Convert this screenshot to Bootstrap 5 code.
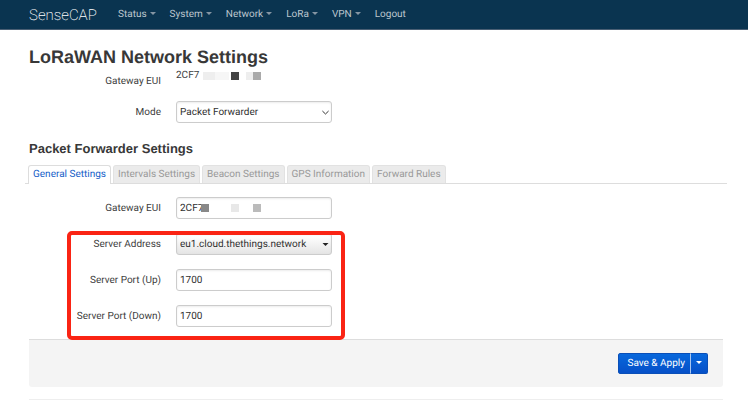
<!DOCTYPE html>
<html lang="en">
<head>
<meta charset="utf-8">
<meta name="viewport" content="width=device-width, initial-scale=1">
<title>SenseCAP - LoRaWAN Network Settings</title>
<link href="https://cdn.jsdelivr.net/npm/bootstrap@5.3.0/dist/css/bootstrap.min.css" rel="stylesheet">
<style>
  body { font-family: Roboto, "Liberation Sans", Arial, sans-serif; font-size: 10px; line-height: 14px; color: #404040; background: #fff; overflow-x: hidden; text-rendering: geometricPrecision; }
  .topbar { background: #0a3450; height: 30px; padding: 0 29px; border-bottom: 1px solid #4a5f74; }
  .topbar .navbar-brand { font-weight: 200; font-size: 15px; line-height: 28px; width: 89px; color: #fff; }
  .topbar .nav-link { color: #bcc6ce; line-height: 30px; margin-right: 14px; }
  .topbar .dropdown-toggle::after { border-width: 3px 3px 0; margin-left: 3px; vertical-align: 2px; color: #8595a3; }
  main { padding: 16px 25px 0 29px; }
  h1, h2 { font-family: "Liberation Sans", Arial, sans-serif; font-weight: 700; color: #383838; }
  h1 { font-size: 18px; line-height: 22px; }
  h2 { font-size: 13px; line-height: 18px; margin-top: 17px; }
  .field-label { width: 132px; margin-right: 15px; padding-top: 2px; text-align: right; }
  .field-label.eui-label { padding-top: 7px; }
  .eui-value { padding-top: 1px; }
  .field-box { width: 156px; }
  .mode-row { margin-top: 12px; }
  .field-box .form-control, .field-box .form-select { height: 22px; padding: 1px 3px 0; font-size: 10px; line-height: 20px; color: #303030; border: 1px solid #ccc; border-radius: 3px; box-shadow: inset 0 1px 2px rgba(0,0,0,.08); text-rendering: inherit; }
  .field-box .form-select.mode-select { background-position: right 2px center; background-size: 7px 7px; background-image: url("data:image/svg+xml,%3Csvg xmlns='http://www.w3.org/2000/svg' viewBox='0 0 7 7'%3E%3Cpath d='M.4 2 3.5 5 6.6 2' fill='none' stroke='%23333'/%3E%3C/svg%3E"); }
  .field-box .form-select.server-select { background-image: url("data:image/svg+xml,%3Csvg xmlns='http://www.w3.org/2000/svg' viewBox='0 0 7 7'%3E%3Cpath d='M.5 2h6l-3 3z' fill='%23222'/%3E%3C/svg%3E"), linear-gradient(#fff 10%, #e4e4e4); background-position: right 2px center, 0 0; background-size: 7px 7px, 100% 100%; }
  .settings-tabs { margin: 7px -4px 0; padding-left: 3px; gap: 2px; border-bottom: 1px solid #ddd; }
  .settings-tabs .nav-link { padding: 2px 4px 1px; line-height: 14px; color: #999; background: #ebebeb; border: 1px solid #e2e2e2; border-bottom: 0; border-radius: 3px 3px 0 0; }
  .settings-tabs .nav-link.active { color: #1560c8; background: #fff; border-color: #ddd; margin-bottom: -1px; }
  .tab-fields { padding: 13px 0 12px; gap: 14px; }
  .redacted { left: 25px; top: 7px; }
  .highlight { left: 38px; top: 47px; width: 278px; height: 109px; border: 4px solid #fa2414; border-radius: 5px; pointer-events: none; }
  .page-actions { background: #f4f4f4; border-top: 1px solid #ddd; border-radius: 0 0 3px 3px; padding: 13px 15px; }
  .page-actions .btn { font-size: 10px; line-height: 19px; color: #fff; padding: 0 5px 0 9px; border: 1px solid #0a4fb8; border-radius: 2px; background: linear-gradient(#0868dc, #0650c8); text-rendering: inherit; }
  .page-actions .dropdown-toggle-split { padding: 0 5px; border-left-color: #a9c6ee; }
  .page-actions .dropdown-toggle-split::after { border-width: 3px 3px 0; vertical-align: 2px; }
  .page-end { border-top: 1px solid #eee; margin-top: 12px; }
</style>
<script src="https://cdn.jsdelivr.net/npm/bootstrap@5.3.0/dist/js/bootstrap.bundle.min.js"></script>
</head>
<body>
<header class="topbar d-flex align-items-center">
  <a class="navbar-brand p-0 m-0" href="#">SenseCAP</a>
  <nav class="d-flex">
    <a class="nav-link dropdown-toggle" href="#">Status</a>
    <a class="nav-link dropdown-toggle" href="#">System</a>
    <a class="nav-link dropdown-toggle" href="#">Network</a>
    <a class="nav-link dropdown-toggle" href="#">LoRa</a>
    <a class="nav-link dropdown-toggle" href="#">VPN</a>
    <a class="nav-link" href="#">Logout</a>
  </nav>
</header>
<main>
  <h1 class="mb-0">LoRaWAN Network Settings</h1>
  <div class="d-flex">
    <span class="field-label eui-label">Gateway EUI</span>
    <div class="field-box d-flex align-items-start">
      <span class="eui-value">2CF7</span>
      <svg class="ms-1 mt-1" width="60" height="8" aria-hidden="true"><path fill="#eee" d="M0 0h12v8H0z"/><path fill="#f6f6f6" d="M12 0h14v8H12z"/><path fill="#444" d="M28 0h8v8h-8z"/><path fill="#eee" d="M43 0h7v8h-7z"/><path fill="#aaa" d="M50 0h8v8h-8z"/></svg>
    </div>
  </div>
  <div class="d-flex align-items-center mode-row">
    <label class="field-label" for="mode">Mode</label>
    <div class="field-box"><select class="form-select mode-select" id="mode"><option>Packet Forwarder</option></select></div>
  </div>

  <h2 class="mb-0">Packet Forwarder Settings</h2>
  <nav class="nav settings-tabs">
    <a class="nav-link active" aria-current="page" href="#">General Settings</a>
    <a class="nav-link" href="#">Intervals Settings</a>
    <a class="nav-link" href="#">Beacon Settings</a>
    <a class="nav-link" href="#">GPS Information</a>
    <a class="nav-link" href="#">Forward Rules</a>
  </nav>

  <div class="tab-fields d-flex flex-column position-relative">
    <div class="d-flex align-items-center">
      <label class="field-label" for="eui">Gateway EUI</label>
      <div class="field-box position-relative">
        <input class="form-control" id="eui" type="text" value="2CF7">
        <svg class="redacted position-absolute" width="62" height="8" aria-hidden="true"><path fill="#888" d="M0 0h8v8H0z"/><path fill="#e8e8e8" d="M30 0h8v8h-8z"/><path fill="#bbb" d="M52 0h8v8h-8z"/></svg>
      </div>
    </div>
    <div class="d-flex align-items-center">
      <label class="field-label" for="server">Server Address</label>
      <div class="field-box"><select class="form-select server-select" id="server"><option>eu1.cloud.thethings.network</option></select></div>
    </div>
    <div class="d-flex align-items-center">
      <label class="field-label" for="port-up">Server Port (Up)</label>
      <div class="field-box"><input class="form-control" id="port-up" type="text" value="1700"></div>
    </div>
    <div class="d-flex align-items-center">
      <label class="field-label" for="port-down">Server Port (Down)</label>
      <div class="field-box"><input class="form-control" id="port-down" type="text" value="1700"></div>
    </div>
    <div class="highlight position-absolute"></div>
  </div>

  <div class="page-actions d-flex justify-content-end">
    <div class="btn-group">
      <button class="btn" type="button">Save &amp; Apply</button>
      <button class="btn dropdown-toggle dropdown-toggle-split" type="button" aria-label="More save options"></button>
    </div>
  </div>
  <div class="page-end"></div>
</main>
</body>
</html>
